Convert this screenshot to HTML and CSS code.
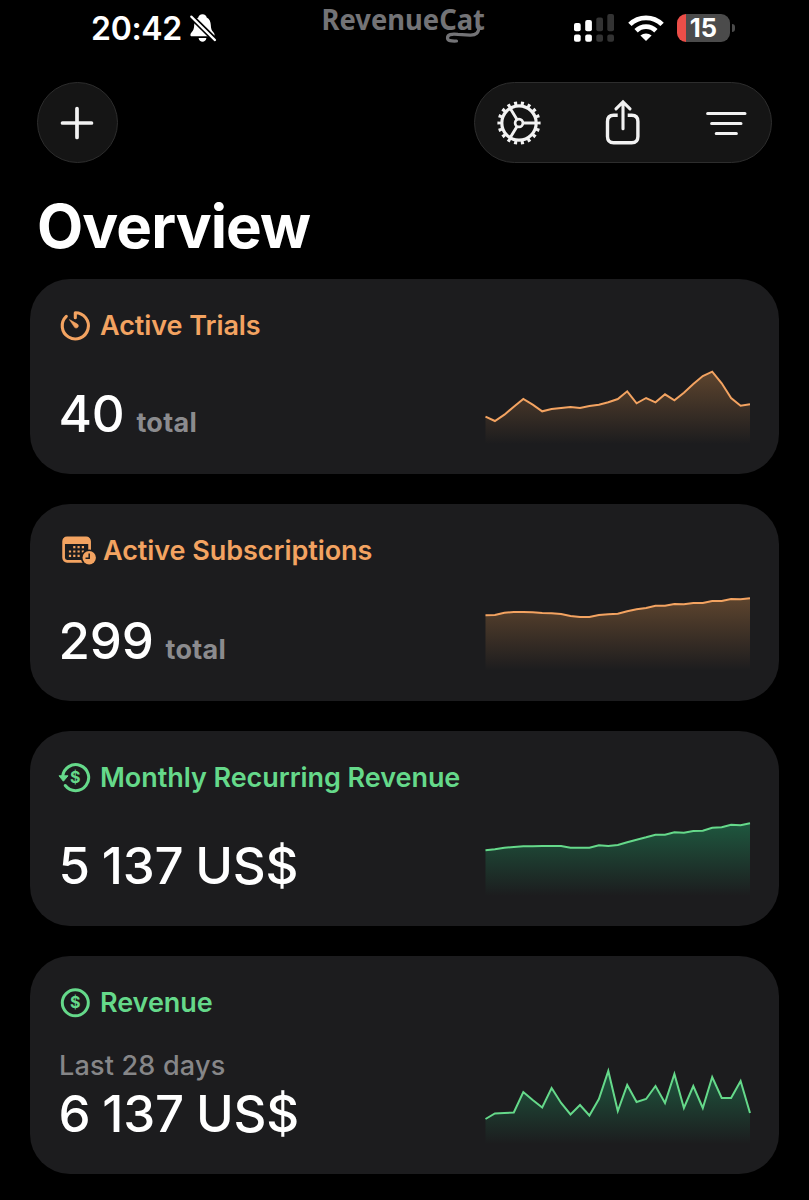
FILE: index.html
```
<!DOCTYPE html>
<html lang="en">
<head>
    <meta charset="UTF-8">
    <meta name="viewport" content="width=device-width, initial-scale=1.0">
    <title>Overview - RevenueCat</title>
    <link rel="stylesheet" href="styles.css">
</head>
<body>
    <div class="status-bar">
        <div class="status-left">
            <span class="time">20:42</span>
            <svg width="27" height="30" viewBox="0 0 27 30">
                <path fill="#fff" d="M12.5 1.3c-2.400 0-3.900 1.400-4.200 3.100C5.500 5.800 4.300 8.600 4.200 12c-.1 4-1 5.400-2.600 7.200C.2 20.800-.2 23.300 2 23.300h21c2.200 0 1.800-2.500.4-4.100-1.600-1.800-2.500-3.200-2.600-7.200-.1-3.400-1.300-6.200-4.100-7.600-.3-1.700-1.800-3.100-4.200-3.100zM8.600 25h7.800c-.4 2.500-2 3.700-3.900 3.700S9 27.500 8.600 25z"/>
                <path stroke="#000" stroke-width="5.500" d="M.5 2.800l25.300 25"/>
                <path stroke="#fff" stroke-width="2.200" stroke-linecap="round" d="M1.300 3.600l23.700 23.500"/>
            </svg>
        </div>
        <svg class="logo" width="170" height="46" viewBox="0 0 170 46">
            <text x="-1.500" y="30" textLength="163.500" lengthAdjust="spacingAndGlyphs">RevenueCat</text>
            <path d="M156 26c0 7-3 9.300-9 9.100l-12-.7c-7-.6-10.500 0-10.500 3.500 0 3 4 3.300 9 3.100" fill="none" stroke="#737376" stroke-width="3.200" stroke-linecap="round"/>
        </svg>
        <div class="status-right">
            <svg width="40" height="28" viewBox="0 0 40 28">
                <g fill="#fff">
                    <rect x="0" y="9" width="6.700" height="8.300" rx="2"/>
                    <rect x="11.200" y="6" width="6.700" height="11.300" rx="2"/>
                    <rect x="0" y="20.500" width="6.700" height="7.200" rx="2"/>
                    <rect x="11.200" y="20.500" width="6.700" height="7.200" rx="2"/>
                </g>
                <g fill="#333">
                    <rect x="22.300" y="3.500" width="6.700" height="13.800" rx="2"/>
                    <rect x="33.300" y="0" width="6.700" height="17.300" rx="2"/>
                    <rect x="22.300" y="20.500" width="6.700" height="7.200" rx="2"/>
                    <rect x="33.300" y="20.500" width="6.700" height="7.200" rx="2"/>
                </g>
            </svg>
            <svg class="wifi" width="36" height="28" viewBox="0 0 36 28">
                <g fill="none" stroke="#fff" stroke-width="4.800">
                    <path d="M1.900 10.400a23 23 0 0 1 32.200 0"/>
                    <path d="M8.100 16.700a14.200 14.200 0 0 1 19.800 0"/>
                </g>
                <path fill="#fff" d="M18 27l-5.600-5.400c3.200-2.900 8-2.900 11.200 0z"/>
            </svg>
            <div class="battery"><span>15</span></div>
        </div>
    </div>

    <div class="toolbar">
        <button class="add-button">
            <svg width="34" height="34" viewBox="0 0 34 34">
                <path d="M17 2.500v29M2.500 17h29" stroke="#f2f2f2" stroke-width="3.700" stroke-linecap="round"/>
            </svg>
        </button>
        <div class="actions">
            <svg width="44" height="44" viewBox="0 0 44 44">
                <circle cx="22" cy="22" r="17.200" stroke-width="3.200"/>
                <circle cx="22" cy="22" r="19.700" stroke-width="3.800" pathLength="180" stroke-dasharray="4.500 5.500" stroke-dashoffset="2.250"/>
                <circle cx="22" cy="22" r="3.900" stroke-width="2.700"/>
                <path d="M26 22h12M20 18.500L13.300 7.500M20 25.500l-6.700 11" stroke-width="2.900"/>
            </svg>
            <svg width="44" height="44" viewBox="0 0 44 44">
                <path d="M17.200 14h-4c-4 0-6.200 2.200-6.200 6.200v15c0 4 2.200 6.200 6.200 6.200h18c4 0 6.200-2.200 6.200-6.200v-15c0-4-2.200-6.200-6.200-6.200h-4" stroke-width="3.400" transform="translate(-.5 .3)"/>
                <path d="M22 27.700V1.700M15 7.900l7-7 7 7" stroke-width="3.100" stroke-linecap="round"/>
            </svg>
            <svg width="44" height="44" viewBox="0 0 44 44">
                <path d="M2.600 12.500h37.400M6.600 22.500h29.400M11.200 32.500h20.200" stroke-width="3" stroke-linecap="round"/>
            </svg>
        </div>
    </div>

    <h1>Overview</h1>

    <div class="cards">
        <div class="card orange trials">
            <div class="info">
                <h2>
                    <svg width="32" height="32" viewBox="0 0 32 32">
                        <path d="M15.300 7.800V2.700A13.100 13.100 0 1 1 6.300 6.300" fill="none" stroke="currentColor" stroke-width="3.100" stroke-linejoin="round" stroke-linecap="round"/>
                        <path d="M9.400 9.600l8 4.500c2.200 1.700.2 5-2.600 3.500z" fill="currentColor" stroke="currentColor" stroke-width=".6" stroke-linejoin="round"/>
                    </svg>
                    <span>Active Trials</span>
                </h2>
                <p class="value">40 <small>total</small></p>
            </div>
            <svg class="chart" width="265" height="75" data-points="47.7,52,45.7,37.7,30,35.7,42.3,40,39,38,39,37,35.7,33.3,30,22.3,34.3,29,33.3,25.3,31.3,23.7,15,7,2.7,14.3,29,36.7,35.3"></svg>
        </div>

        <div class="card orange subscriptions">
            <div class="info">
                <h2>
                    <svg width="35" height="32" viewBox="0 0 35 32">
                        <rect x="3.600" y="2.900" width="26" height="23.400" rx="3.500" fill="none" stroke="currentColor" stroke-width="2.700"/>
                        <path d="M3 9V5.500C3 3.500 4.500 2 6.500 2h20c2 0 3.500 1.500 3.500 3.500V9z" fill="currentColor"/>
                        <path d="M13.200 12.200h12M8.900 16.500h16M8.900 20.800h12" stroke="currentColor" stroke-width="2.200" stroke-dasharray="2.200 2.100"/>
                        <circle cx="29.200" cy="22.800" r="8.400" fill="#1c1c1e"/>
                        <circle cx="29.200" cy="22.800" r="6.700" fill="currentColor"/>
                        <path d="M29.200 18.600v4.600h-3.700" fill="none" stroke="#1c1c1e" stroke-width="1.500"/>
                    </svg>
                    <span>Active Subscriptions</span>
                </h2>
                <p class="value">299 <small>total</small></p>
            </div>
            <svg class="chart" width="265" height="75" data-points="19.3,19,16.7,16,16,16.3,17,17.3,18,20,21,21,19,18.3,17.7,15.3,13.3,12,9.7,9.7,8,8.3,7,7,5,5,3,3.3,2.3"></svg>
        </div>

        <div class="card green mrr">
            <div class="info">
                <h2>
                    <svg width="32" height="32" viewBox="0 0 32 32">
                        <path d="M2.700 14.500A13 13 0 1 1 5.300 23.500" fill="none" stroke="currentColor" stroke-width="3" stroke-linecap="round"/>
                        <path d="M-1 13.800h9l-4.600 5.400z" fill="currentColor" stroke="currentColor" stroke-linejoin="round"/>
                        <text class="dollar" x="15.300" y="21.200">$</text>
                    </svg>
                    <span>Monthly Recurring Revenue</span>
                </h2>
                <p class="value">5 137 US$</p>
            </div>
            <svg class="chart" width="265" height="75" data-points="29.3,28.3,26.7,26,25.3,25.3,25,25,25,26.7,26.7,26.7,24.3,25,24,21.3,18.7,16.3,13.7,13.7,11.3,11.7,10,9.7,6.7,6.3,3.7,4.3,2.3"></svg>
        </div>

        <div class="card green revenue">
            <div class="info">
                <h2>
                    <svg width="32" height="32" viewBox="0 0 32 32">
                        <circle cx="15.300" cy="15.800" r="13" fill="none" stroke="currentColor" stroke-width="3"/>
                        <text class="dollar" x="15.300" y="21.200">$</text>
                    </svg>
                    <span>Revenue</span>
                </h2>
                <div>
                    <p class="period">Last 28 days</p>
                    <p class="value">6 137 US$</p>
                </div>
            </div>
            <svg class="chart" width="265" height="75" data-points="50,44.5,44,43.5,23,31,38.5,19,34,45.5,36,46.5,30,2,42,16,33,30,17,34,5,39,17,39,8,29,29,12,44"></svg>
        </div>
    </div>

    <script>
        document.querySelectorAll(".chart").forEach((chart, n) => {
            let values = chart.dataset.points.split(",").map(Number);
            let step = 264.5 / (values.length - 1);
            let line = values.map((y, i) => (i * step + 0.5).toFixed(1) + "," + y).join(" ");
            chart.innerHTML = `
                <defs>
                    <linearGradient id="fade${n}" x1="0" y1="0" x2="0" y2="1">
                        <stop class="fade-top" offset="0"/>
                        <stop class="fade-bottom" offset="1"/>
                    </linearGradient>
                </defs>
                <polygon points="0.5,75 ${line} 265,75" fill="url(#fade${n})"/>
                <polyline points="${line}"/>`;
        });
    </script>
</body>
</html>
```

FILE: styles.css
```
* {
    margin: 0;
    padding: 0;
    box-sizing: border-box;
}
body {
    background: #000;
    color: #fff;
    font-family: Inter, sans-serif;
    height: 1200px;
    overflow: hidden;
}
svg {
    display: block;
    flex-shrink: 0;
    overflow: visible;
}

/* status bar */
.status-bar {
    display: grid;
    grid-template-columns: 232px 251px 160px;
    align-items: center;
    height: 56px;
    padding-left: 91px;
}
.status-left, .status-right {
    display: flex;
    align-items: center;
}
.status-left {
    gap: 10px;
}
.time {
    width: 89px;
    font-size: 32px;
    font-weight: 600;
    letter-spacing: -0.3px;
    white-space: nowrap;
}
.logo {
    align-self: start;
}
.logo text {
    font-family: "Noto Sans", sans-serif;
    font-size: 28.5px;
    font-weight: 700;
    fill: #737376;
}
.wifi {
    margin: 0 13px 0 14px;
}
.battery {
    position: relative;
    width: 53px;
    height: 28px;
    border-radius: 9px;
    background: linear-gradient(90deg, #eb4e48 9px, #4b4b4b 9px);
    text-align: center;
    font-size: 25.5px;
    font-weight: 700;
    line-height: 28px;
}
.battery::after {
    content: "";
    position: absolute;
    right: -5px;
    top: 10px;
    width: 3px;
    height: 8px;
    border-radius: 0 4px 4px 0;
    background: #4b4b4b;
}

/* toolbar */
.toolbar {
    display: flex;
    justify-content: space-between;
    padding: 26px 37px 0;
}
.add-button, .actions {
    display: flex;
    align-items: center;
    height: 81px;
    border: 1.5px solid #2d2d2d;
    border-radius: 41px;
    background: #151515;
}
.add-button {
    justify-content: center;
    width: 81px;
    padding-right: 2px;
}
.actions {
    justify-content: space-between;
    width: 298px;
    padding: 0 22px;
}
.actions svg {
    fill: none;
    stroke: #f2f2f2;
}

h1 {
    height: 116px;
    padding: 27px 0 0 37px;
    font-size: 60px;
    font-weight: 700;
    line-height: 72px;
    letter-spacing: -0.9px;
}

/* metric cards */
.cards {
    display: flex;
    flex-direction: column;
    gap: 30px;
    padding: 0 30px;
}
.card {
    display: flex;
    justify-content: space-between;
    align-items: flex-end;
    height: 195px;
    padding: 30px 29px 30px 30px;
    border-radius: 40px;
    background: #1c1c1e;
}
.subscriptions {
    height: 197px;
}
.revenue {
    height: 218px;
}
.info {
    display: flex;
    flex-direction: column;
    justify-content: space-between;
    height: 100%;
}
.card h2 {
    display: flex;
    align-items: center;
    gap: 8px;
    height: 33px;
    color: var(--accent);
    font-size: 27px;
    font-weight: 600;
    letter-spacing: -0.06px;
    white-space: nowrap;
}
.value {
    margin-left: -1.5px;
    font-size: 51px;
    font-weight: 500;
    line-height: 60px;
    letter-spacing: -0.2px;
    word-spacing: -1.5px;
    white-space: nowrap;
}
.value small {
    font-size: 27px;
    font-weight: 700;
    line-height: 1;
    letter-spacing: 0.3px;
    color: #8b8b8e;
}
.period {
    margin: 0 0 2px -1px;
    font-size: 27px;
    font-weight: 500;
    line-height: 33px;
    letter-spacing: 0.2px;
    color: #868688;
}
.dollar {
    font-size: 16px;
    font-weight: 700;
    text-anchor: middle;
    fill: currentColor;
}

.orange {
    --accent: #f3a361;
    --fill: #e89a50;
}
.green {
    --accent: #65d98a;
    --fill: #22b070;
}
.chart polyline {
    fill: none;
    stroke: var(--accent);
    stroke-width: 2;
}
.fade-top {
    stop-color: var(--fill);
    stop-opacity: 0.32;
}
.green .fade-top {
    stop-opacity: 0.4;
}
.fade-bottom {
    stop-color: var(--fill);
    stop-opacity: 0;
}
```
